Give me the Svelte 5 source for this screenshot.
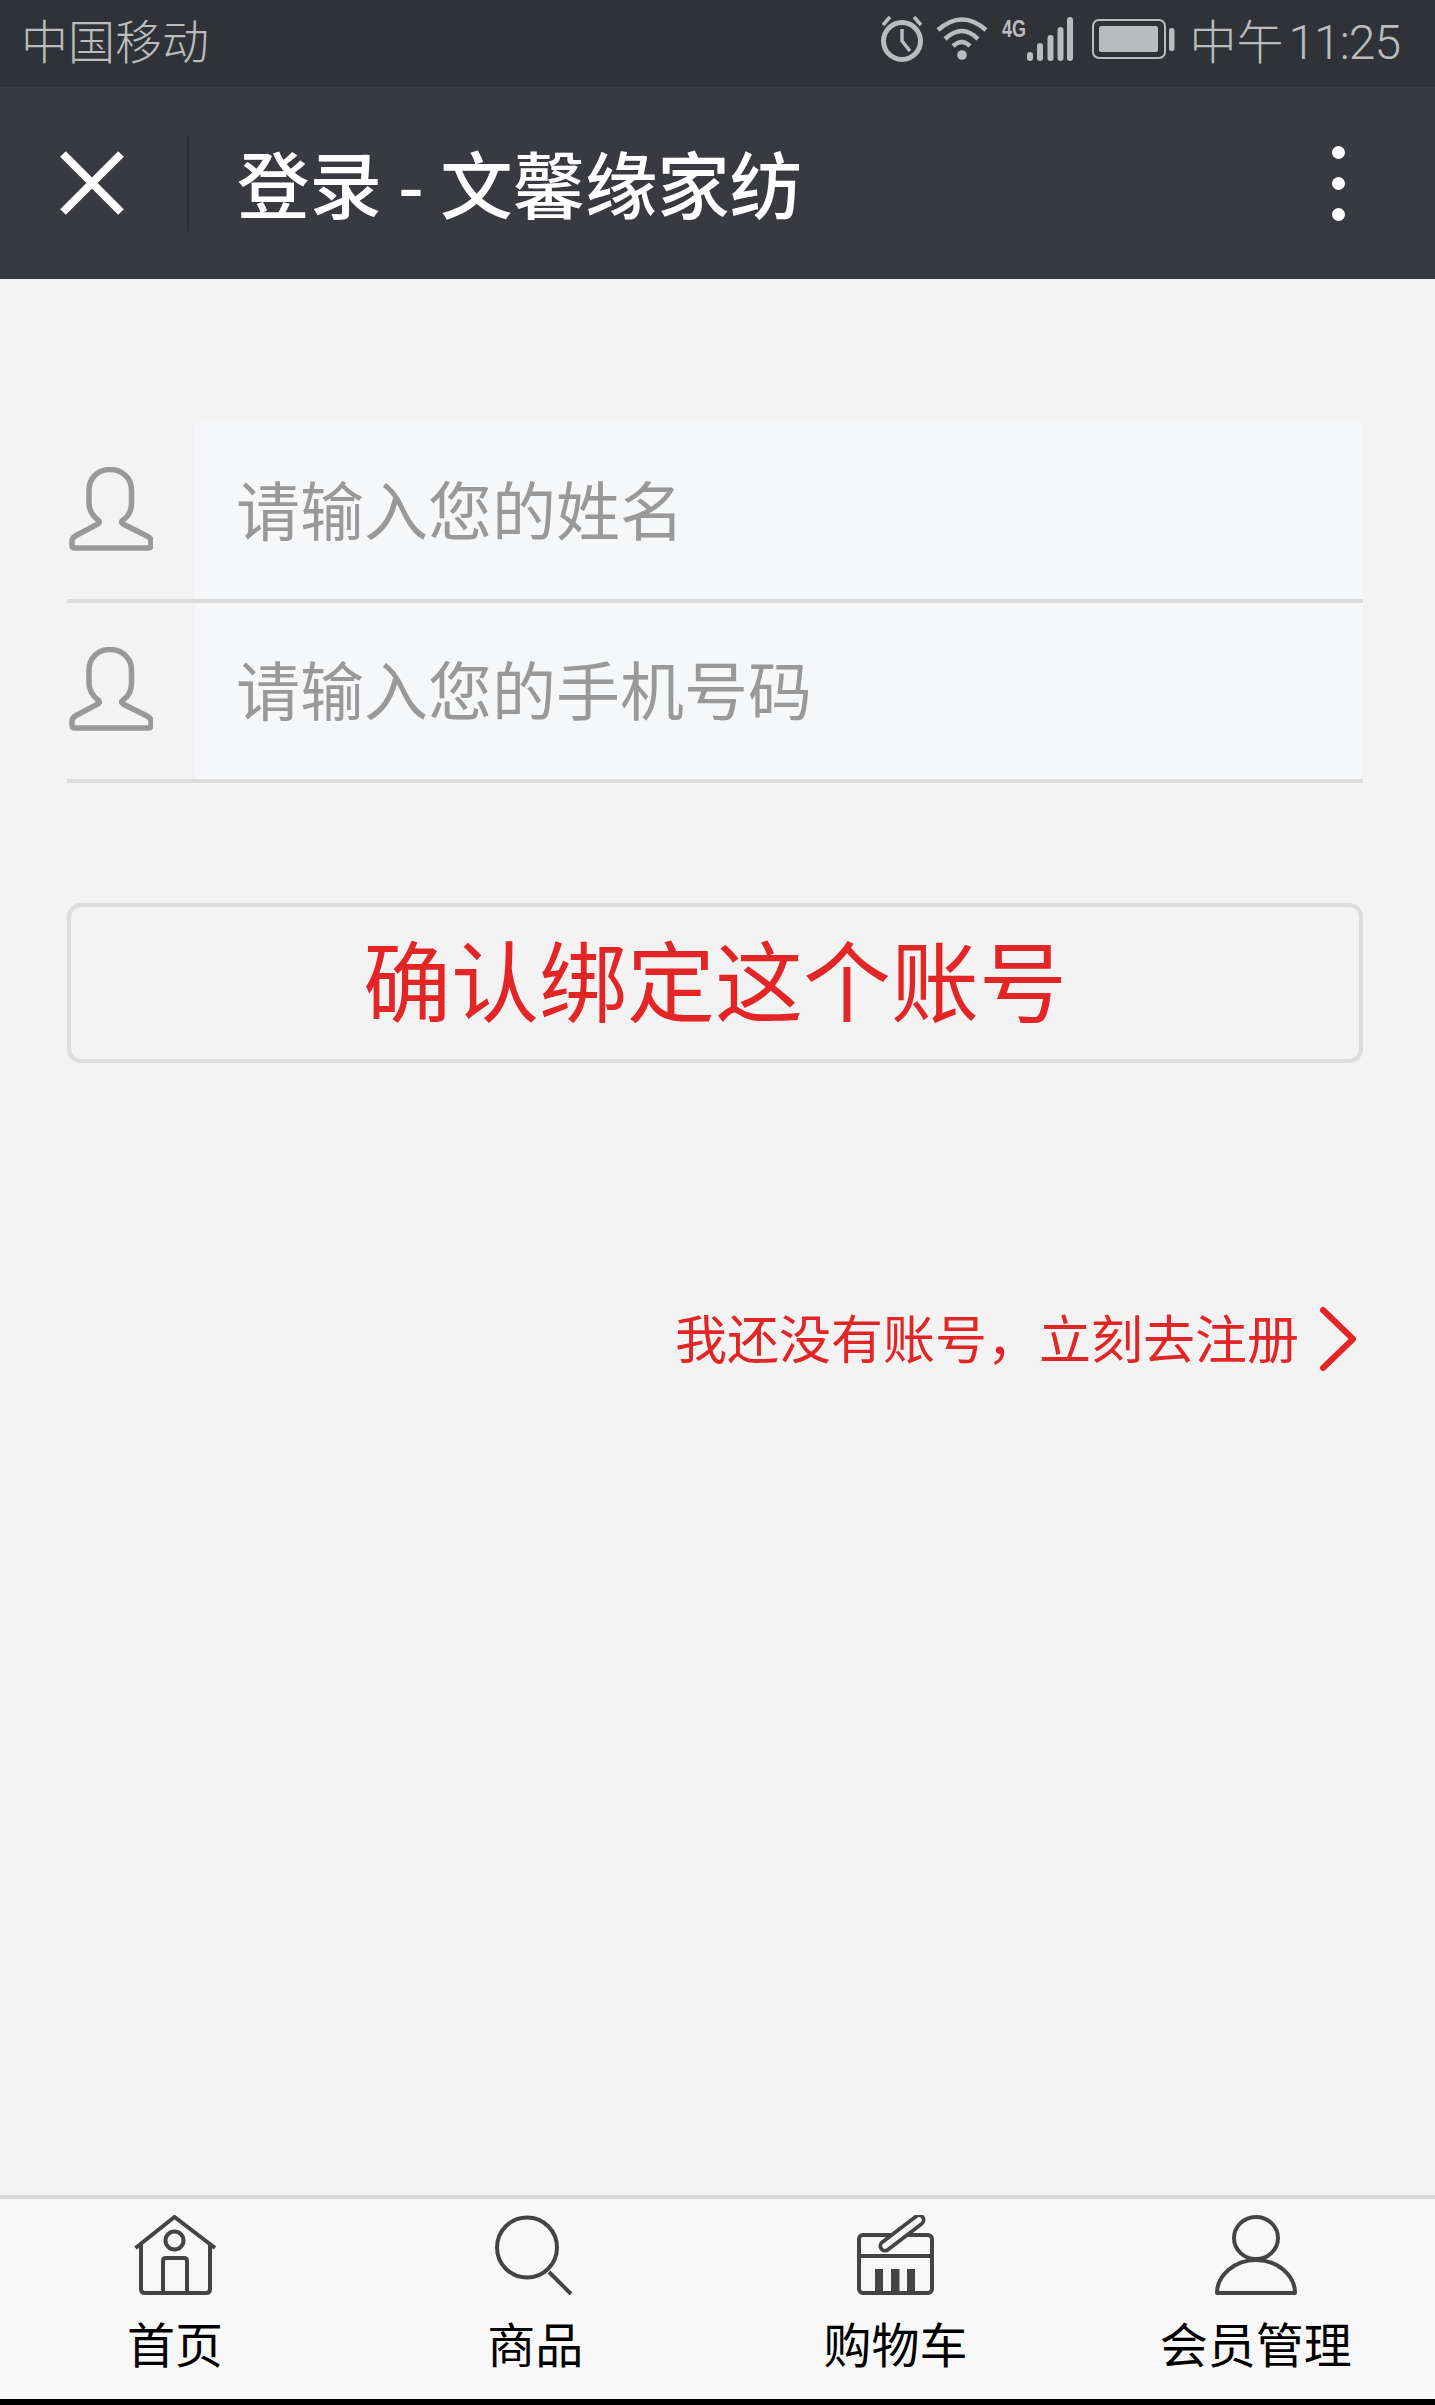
<script>
  const fields = ['请输入您的姓名', '请输入您的手机号码'];
</script>

<div class="page">
  <header class="status">
    <span class="carrier">中国移动</span>
    <div class="status-right">
      <svg class="status-icons" viewBox="0 0 295 87" width="295" height="87" aria-hidden="true">
        <g fill="none" stroke="#bbbcbe">
          <circle cx="22" cy="41" r="18.5" stroke-width="5" />
          <path d="M22 29v12l8 10" stroke-width="3.5" />
          <path d="M3 25l7-8M41 25l-7-8" stroke-width="3.5" />
          <path d="M58 30Q82 9 106 30" stroke-width="4.5" />
          <path d="M65 39Q82 23 98 39" stroke-width="4.5" />
          <path d="M73 46Q82 38 90 46" stroke-width="4.5" />
        </g>
        <g fill="#bbbcbe">
          <circle cx="82" cy="55" r="4.8" />
          <text x="122" y="37" class="net" textLength="24" lengthAdjust="spacingAndGlyphs">4G</text>
          <rect x="147" y="52" width="6" height="9" rx="3" />
          <rect x="157" y="43" width="6" height="18" rx="3" />
          <rect x="167.500" y="35" width="6" height="26" rx="3" />
          <rect x="177.500" y="27" width="6" height="34" rx="3" />
          <rect x="187" y="17" width="6" height="44" rx="3" />
          <rect x="213" y="20" width="72" height="38" rx="6" fill="none" stroke="#bbbcbe" stroke-width="2" />
          <rect x="219" y="26" width="59" height="26" rx="2" />
          <rect x="289" y="28" width="5.500" height="23" rx="2.500" />
        </g>
      </svg>
      <span class="clock">中午<b>11:25</b></span>
    </div>
  </header>

  <nav class="topbar">
    <svg class="close" viewBox="0 0 64 64" width="64" height="64" aria-hidden="true">
      <path d="M3 3L61 61M61 3L3 61" fill="none" stroke="#fff" stroke-width="8" />
    </svg>
    <i class="divider"></i>
    <h1>登录 - 文馨缘家纺</h1>
    <div class="dots"><i></i><i></i><i></i></div>
  </nav>

  <main class="content">
    <section class="form">
      {#each fields as label}
        <div class="row">
          <div class="field-icon">
            <svg viewBox="0 0 84 84" width="84" height="84" aria-hidden="true">
              <path d="M41 2.500C29 2.500 20 11 20 23V36C20 44 24 49 29 53Q32 55 29 57L8 68Q3 70.500 3 74V78Q3 81 6 81H79Q82 81 82 78V74Q82 71 78 69L54 57Q51 55 54 53C60 49 62.500 44 62.500 36V23C62.500 11 53 2.500 41 2.500Z" fill="none" stroke="#999" stroke-width="5.500" />
            </svg>
          </div>
          <div class="field">{label}</div>
        </div>
      {/each}
    </section>

    <button class="confirm" type="button">确认绑定这个账号</button>

    <a class="register" href="#register">
      <span>我还没有账号，立刻去注册</span>
      <svg viewBox="0 0 36 64" width="36" height="64" aria-hidden="true">
        <path d="M3 3L33 32L3 61" fill="none" stroke="#e32526" stroke-width="6" stroke-linecap="round" stroke-linejoin="round" />
      </svg>
    </a>
  </main>

  <footer class="tabs">
    <div class="tab-row">
      <div class="tab">
        <svg viewBox="0 0 82 80" width="82" height="80" aria-hidden="true">
          <g fill="none" stroke="#444" stroke-width="4">
            <path d="M1.500 33L40.500 2L81 33" />
            <path d="M7 28V74Q7 78 11 78H72Q76 78 76 74V28" />
            <circle cx="40.500" cy="25.500" r="9" />
            <path d="M29 78V46Q29 43 32 43H50Q53 43 53 46V78" />
          </g>
        </svg>
        <span>首页</span>
      </div>
      <div class="tab">
        <svg viewBox="0 0 82 80" width="82" height="80" aria-hidden="true">
          <g fill="none" stroke="#444" stroke-width="4">
            <circle cx="33" cy="32.500" r="30" />
            <path d="M55 57L77 79" />
          </g>
        </svg>
        <span>商品</span>
      </div>
      <div class="tab">
        <svg viewBox="0 0 82 80" width="82" height="80" aria-hidden="true">
          <rect x="4" y="20" width="73" height="58" rx="4" fill="none" stroke="#444" stroke-width="4" />
          <path d="M4 41H77" stroke="#444" stroke-width="4" />
          <path d="M20 54h8v25h-8zM36 54h8.500v25h-8.500zM52 54h8v25h-8z" fill="#444" />
          <path d="M30 31L64 5" stroke="#444" stroke-width="13" stroke-linecap="round" />
          <path d="M30 31L64 5" stroke="#f8f8f8" stroke-width="5.500" stroke-linecap="round" />
        </svg>
        <span>购物车</span>
      </div>
      <div class="tab">
        <svg viewBox="0 0 82 80" width="82" height="80" aria-hidden="true">
          <g fill="none" stroke="#444" stroke-width="4">
            <ellipse cx="41" cy="23" rx="22" ry="21" />
            <path d="M2 78C2 60 20 45 41 45C62 45 80 60 80 78Z" stroke-linejoin="round" />
          </g>
        </svg>
        <span>会员管理</span>
      </div>
    </div>
  </footer>
</div>

<style>
  :global(body) {
    margin: 0;
    background: #f3f3f3;
  }

  .page {
    display: flex;
    flex-direction: column;
    width: 1435px;
    height: 2405px;
    overflow: hidden;
    font-family: "Noto Sans CJK SC", "Noto Sans", sans-serif;
  }

  .status {
    display: flex;
    flex: none;
    align-items: center;
    justify-content: space-between;
    height: 87px;
    padding: 0 35px 0 21px;
    box-sizing: border-box;
    background: #313237;
    color: #bbbcbe;
    font-size: 47px;
    font-weight: 300;
    line-height: 87px;
  }

  .carrier {
    margin-top: -10px;
  }

  .status-right {
    display: flex;
    align-items: center;
  }

  .status-icons {
    display: block;
    margin-right: 14px;
  }

  .net {
    font-family: "Liberation Sans", sans-serif;
    font-size: 24px;
    font-weight: 700;
  }

  .clock {
    margin-top: -7px;
  }

  .clock b {
    margin-left: 5px;
    font-family: Roboto, "Noto Sans CJK SC", sans-serif;
    font-size: 48px;
    font-weight: 300;
    letter-spacing: -1px;
  }

  .topbar {
    display: flex;
    flex: none;
    align-items: center;
    height: 192px;
    background: #393a3f;
  }

  .close {
    display: block;
    flex: none;
    margin-left: 60px;
  }

  .divider {
    flex: none;
    width: 2px;
    height: 96px;
    margin-left: 63px;
    background: #2e2f33;
  }

  h1 {
    flex: 1;
    margin: -2px 0 0 48px;
    color: #fff;
    font-size: 72.400px;
    font-weight: 500;
    line-height: 72px;
  }

  .dots {
    display: flex;
    flex-direction: column;
    gap: 18px;
    margin-right: 90px;
  }

  .dots i {
    display: block;
    width: 13px;
    height: 13px;
    border-radius: 50%;
    background: #fff;
  }

  .content {
    display: flex;
    flex: 1;
    flex-direction: column;
    padding: 144px 72px 0 67px;
    background: #f3f3f3;
  }

  .form {
    display: flex;
    flex-direction: column;
  }

  .row {
    display: flex;
    height: 180px;
    box-sizing: border-box;
    border-bottom: 4px solid #dcdcdc;
  }

  .field-icon {
    display: flex;
    flex: none;
    width: 128px;
    padding: 44px 0 0 2px;
    box-sizing: border-box;
  }

  .field-icon svg {
    display: block;
  }

  .field {
    flex: 1;
    padding-left: 41px;
    background: #f6f7f9;
    color: #999;
    font-size: 64px;
    line-height: 168px;
  }

  .confirm {
    display: block;
    width: 100%;
    height: 160px;
    margin-top: 120px;
    padding: 0 0 13px;
    border: 4px solid #dcdcdc;
    border-radius: 14px;
    background: transparent;
    color: #e32526;
    font-family: inherit;
    font-size: 88px;
    line-height: 139px;
  }

  .register {
    display: flex;
    align-items: center;
    justify-content: flex-end;
    margin-top: 244px;
    padding-right: 7px;
    color: #e32526;
    font-size: 52px;
    line-height: 64px;
    text-decoration: none;
  }

  .register span {
    margin: -5px 1px 0 0;
  }

  .register svg {
    display: block;
    margin-left: 20px;
  }

  .tabs {
    flex: none;
    height: 210px;
    box-sizing: border-box;
    border-top: 4px solid #d8d8d8;
    border-bottom: 6px solid #000;
    background: #f8f8f8;
  }

  .tab-row {
    display: flex;
    margin: 0 -1px 0 -5px;
  }

  .tab {
    display: flex;
    flex: 1;
    flex-direction: column;
    align-items: center;
    padding-top: 16px;
    color: #000;
    font-size: 48px;
    line-height: 48px;
  }

  .tab svg {
    display: block;
  }

  .tab span {
    margin-top: 23px;
  }
</style>
